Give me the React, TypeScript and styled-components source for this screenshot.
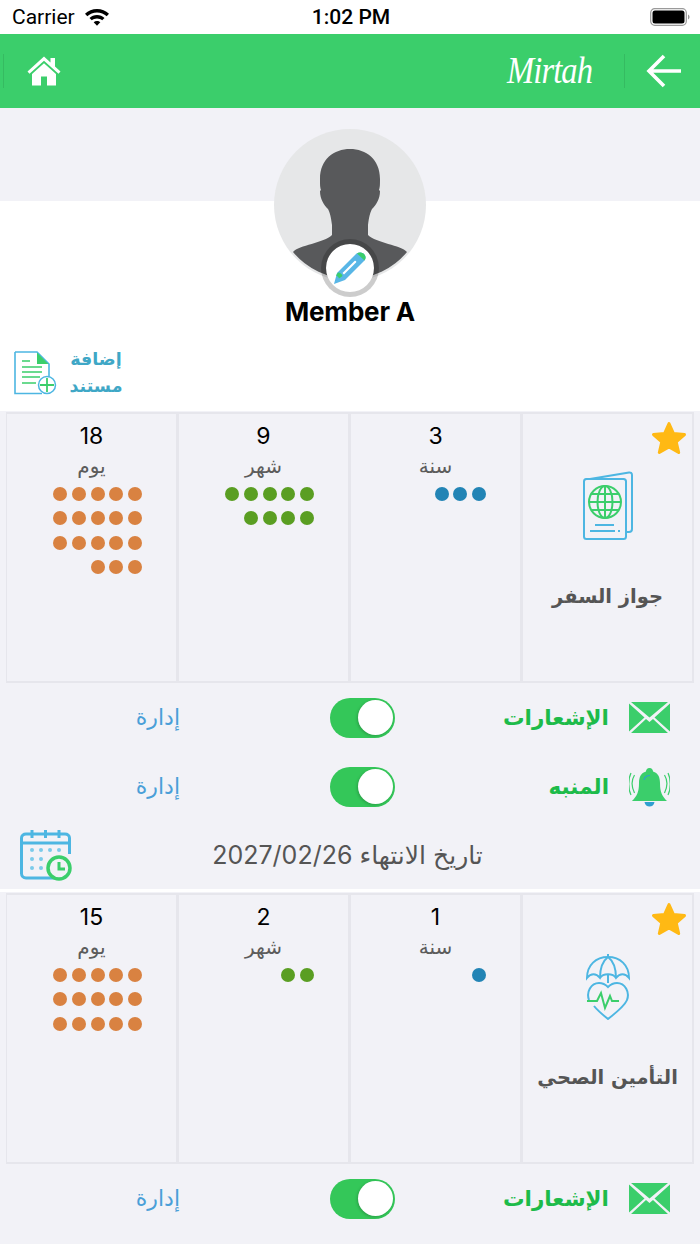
import styled, { createGlobalStyle } from "styled-components";

const ARABIC = `"DejaVu Sans", "Noto Sans", sans-serif`;

const GlobalStyle = createGlobalStyle`
  html, body {
    margin: 0;
    padding: 0;
    background: #f2f2f7;
  }
  * {
    box-sizing: border-box;
  }
`;

const Page = styled.div`
  width: 700px;
  height: 1244px;
  overflow: hidden;
  font-family: Inter, "Liberation Sans", sans-serif;
  background: #f2f2f7;
`;

/* status bar */
const StatusBar = styled.div`
  height: 34px;
  background: #fff;
  display: grid;
  grid-template-columns: 1fr auto 1fr;
  align-items: center;
  padding: 0 10px 0 12px;
  color: #000;
`;
const StatusLeft = styled.div`
  display: flex;
  align-items: center;
  gap: 9px;
  font-family: Roboto, sans-serif;
  font-size: 21px;
`;
const StatusTime = styled.div`
  font-family: Roboto, sans-serif;
  font-size: 21px;
  font-weight: 500;
`;
const StatusRight = styled.div`
  display: flex;
  justify-content: flex-end;
`;

/* nav */
const NavBar = styled.header`
  height: 74px;
  background: #3bce6b;
  display: flex;
  align-items: center;
  justify-content: space-between;
  padding: 0 18px 0 3px;
`;
const NavGroup = styled.div<{ $gap: number }>`
  display: flex;
  align-items: center;
  gap: ${(p) => p.$gap}px;
`;
const NavDivider = styled.span`
  display: block;
  width: 1px;
  height: 34px;
  background: #35bb61;
`;
const Logo = styled.span`
  display: block;
  width: 85px;
  color: #fff;
  font-family: "Liberation Serif", serif;
  font-style: italic;
  font-size: 37px;
  line-height: 40px;
  letter-spacing: -1px;
  transform: scaleX(0.88);
  transform-origin: left center;
  white-space: nowrap;
`;

/* profile header */
const Hero = styled.section`
  height: 303px;
  padding-top: 21px;
  background: linear-gradient(#f2f2f7 93px, #fff 93px);
  display: flex;
  flex-direction: column;
`;
const Avatar = styled.div`
  position: relative;
  width: 152px;
  height: 152px;
  margin: 0 auto;
`;
const EditBadge = styled.div`
  position: absolute;
  left: 47px;
  top: 110px;
  width: 58px;
  height: 58px;
  border-radius: 50%;
  background: #fff;
  background-clip: padding-box;
  border: 5.5px solid rgba(0, 0, 0, 0.2);
  display: flex;
  align-items: center;
  justify-content: center;
`;
const MemberName = styled.h1`
  margin: 15px 0 0;
  text-align: center;
  font-size: 26px;
  line-height: 32px;
  font-weight: 700;
  letter-spacing: -0.2px;
  color: #000;
`;
const AddDocument = styled.div`
  display: flex;
  align-items: center;
  gap: 10px;
  margin-top: 18px;
  padding-left: 14px;
`;
const AddDocumentLabel = styled.div`
  width: 56px;
  text-align: center;
  font-family: ${ARABIC};
  font-size: 17.5px;
  line-height: 27px;
  font-weight: 700;
  color: #3fa7c6;
  white-space: nowrap;
`;

/* document card */
const CardSection = styled.section`
  padding: 1px 6px 0;
`;
const CardGrid = styled.div`
  display: grid;
  grid-template-columns: repeat(4, 172px);
  height: 271px;
`;
const CountCell = styled.div`
  border: 2px solid #e6e6ec;
  border-left-width: 1px;
  display: flex;
  flex-direction: column;
  align-items: center;
  padding-top: 7px;
`;
const CountValue = styled.div`
  font-size: 23px;
  line-height: 30px;
  color: #000;
`;
const CountUnit = styled.div`
  font-family: ${ARABIC};
  font-size: 20px;
  line-height: 30px;
  color: #5c5c5c;
`;
const Dots = styled.div`
  width: 90px;
  margin: 6px 0 0 11px;
  display: flex;
  flex-flow: row-reverse wrap;
  column-gap: 4.7px;
  row-gap: 10.3px;
`;
const Dot = styled.span<{ $color: string }>`
  display: block;
  width: 14px;
  height: 14px;
  border-radius: 50%;
  background: ${(p) => p.$color};
`;
const DocCell = styled.div`
  position: relative;
  border: 2px solid #e6e6ec;
  border-left-width: 1px;
  display: flex;
  flex-direction: column;
  align-items: center;
  padding-top: 57px;
`;
const StarBadge = styled.div`
  position: absolute;
  top: 7px;
  right: 5px;
  line-height: 0;
`;
const DocIcon = styled.div`
  height: 70px;
  display: flex;
  align-items: center;
  justify-content: center;
`;
const DocTitle = styled.div`
  margin-top: 38px;
  font-family: ${ARABIC};
  font-size: 19.5px;
  line-height: 36px;
  font-weight: 700;
  color: #555;
  white-space: nowrap;
`;

/* setting rows */
const SettingRow = styled.div`
  height: 69px;
  display: flex;
  align-items: center;
  padding-right: 30px;
`;
const ManageLink = styled.a`
  width: 180px;
  text-align: right;
  font-family: ${ARABIC};
  font-size: 22px;
  color: #4a9fd8;
`;
const Toggle = styled.div`
  width: 65px;
  height: 40px;
  margin-left: 150px;
  border-radius: 20px;
  background: #34c759;
  padding: 2.5px;
  display: flex;
  justify-content: flex-end;
`;
const ToggleThumb = styled.span`
  display: block;
  width: 35px;
  height: 35px;
  border-radius: 50%;
  background: #fff;
  box-shadow: -1px 1px 3px rgba(0, 0, 0, 0.2);
`;
const SettingLabel = styled.div`
  flex: 1;
  text-align: right;
  padding-right: 20px;
  font-family: ${ARABIC};
  font-size: 21.5px;
  font-weight: 700;
  color: #1dbb4a;
`;
const SettingIcon = styled.div`
  width: 41px;
  display: flex;
  justify-content: center;
`;

const DateRow = styled.div`
  height: 68px;
  display: flex;
  align-items: center;
  padding: 0 77px 0 20px;
`;
const DateText = styled.div`
  flex: 1;
  text-align: center;
  direction: rtl;
  font-family: Inter, ${ARABIC};
  font-size: 25px;
  color: #555;
  white-space: nowrap;
`;
const Separator = styled.div`
  height: 3px;
  background: #fff;
`;

/* icons */
const WifiIcon = () => (
  <svg width="26" height="20" viewBox="0 0 26 20">
    <path fill="#000" d="M13 2C8.400 2 4.200 3.800 1 6.800L3.300 9.300C5.900 6.900 9.300 5.400 13 5.400S20.100 6.900 22.700 9.300L25 6.800C21.800 3.800 17.600 2 13 2Z" />
    <path fill="#000" d="M13 8C10.100 8 7.500 9.100 5.500 10.900L7.800 13.300C9.200 12.100 11 11.400 13 11.400S16.800 12.100 18.200 13.300L20.500 10.900C18.500 9.100 15.900 8 13 8Z" />
    <path fill="#000" d="M13 14C11.700 14 10.600 14.500 9.700 15.200L13 18.800L16.300 15.200C15.400 14.500 14.300 14 13 14Z" />
  </svg>
);

const BatteryIcon = () => (
  <svg width="40" height="20" viewBox="0 0 40 20">
    <rect x="0.700" y="1.700" width="35.600" height="16.600" rx="4" fill="none" stroke="#9a9a9a" strokeWidth="1.200" />
    <rect x="2.500" y="3.500" width="32" height="13" rx="2.500" fill="#000" />
    <path d="M38 7.500C39 8 39.500 9 39.500 10S39 12 38 12.500Z" fill="#9a9a9a" />
  </svg>
);

const HomeIcon = () => (
  <svg width="34" height="30" viewBox="0 0 34 30">
    <path fill="#fff" d="M17 0.500L0.500 15.500L2.500 17.800L17 4.700L31.500 17.800L33.500 15.500L28 10.500V2H23.500V6.400Z" />
    <path fill="#fff" d="M17 7.300L5 18V29.500H14V20.500H20V29.500H29V18Z" />
  </svg>
);

const BackArrow = () => (
  <svg width="36" height="34" viewBox="0 0 36 34">
    <path fill="none" stroke="#fff" strokeWidth="3.600" d="M18 2L3 17L18 32M3 17H35" />
  </svg>
);

const Silhouette = () => (
  <svg width="152" height="152" viewBox="0 0 152 152">
    <circle cx="76" cy="76" r="76" fill="#e6e7e8" />
    <path
      fill="#58595b"
      d="M76 20C60 20 46 30 46 50C46 56 46 58 47 61L46 62C46 70 50 76 54 80C56 84 57 88 58 96L58 106C50 114 25 116 19 123A74 74 0 0 0 133 123C127 116 102 114 94 106L94 96C95 88 96 84 98 80C102 76 106 70 106 62L105 61C106 58 106 56 106 50C106 30 92 20 76 20Z"
    />
  </svg>
);

const PencilIcon = () => (
  <svg width="34" height="34" viewBox="0 0 34 34">
    <path fill="#58b6e6" d="M1 33L4 22L23 3C25 1 29 1 31 3C33 5 33 8 31 10L12 29Z" />
    <path fill="#3bce6b" d="M24 2.500C26 1 29 1.500 31 3C33 5 33 7.500 31.500 9.500Z" />
    <path fill="#3bce6b" d="M5 21.500C7 21.500 9 23 9.500 25L6 27.500C5.500 26 4.500 25 3 24.500Z" />
    <path fill="#fff" d="M9.500 22L21.500 10C22.500 9 24 10.500 23 11.500L11 23.500Z" />
  </svg>
);

const AddDocIcon = () => (
  <svg width="44" height="44" viewBox="0 0 44 44">
    <path fill="none" stroke="#4db6e2" strokeWidth="1.600" d="M1 1H23L35 13V26M28 42.500H1V1" />
    <path fill="#3bce6b" d="M23 1.500L34.500 13H23Z" />
    <path stroke="#3bce6b" strokeWidth="1.500" d="M8 10H16M8 16H28M8 21H28M8 26H26M8 32H22" />
    <circle cx="33" cy="34" r="8.500" fill="#fff" stroke="#4db6e2" strokeWidth="1.500" />
    <path stroke="#3bce6b" strokeWidth="1.800" d="M33 27V41M26 34H40" />
  </svg>
);

const StarIcon = () => (
  <svg width="36" height="35" viewBox="0 0 36 35">
    <path
      fill="#ffb914"
      stroke="#ffb914"
      strokeWidth="3"
      strokeLinejoin="round"
      d="M18 2.500L22.500 12.500L33.500 13.500L25.200 20.800L27.700 31.500L18 25.900L8.300 31.500L10.800 20.800L2.500 13.500L13.500 12.500Z"
    />
  </svg>
);

const PassportIcon = () => (
  <svg width="50" height="70" viewBox="0 0 50 70">
    <path fill="none" stroke="#4db6e2" strokeWidth="2" d="M1 9L46 1.500C47.500 1.300 49 2 49 4V58C49 60 48 61 46 61H43" />
    <rect x="1" y="8" width="42" height="60" rx="2.500" fill="#f2f2f7" stroke="#4db6e2" strokeWidth="2" />
    <circle cx="22" cy="31" r="16" fill="none" stroke="#3bce6b" strokeWidth="2" />
    <ellipse cx="22" cy="31" rx="7.500" ry="16" fill="none" stroke="#3bce6b" strokeWidth="2" />
    <path fill="none" stroke="#3bce6b" strokeWidth="2" d="M22 15V47M6 31H38M8 23H36M8 39H36" />
    <path fill="none" stroke="#4db6e2" strokeWidth="2" d="M12 54H31M7 60H32M35 60H37" />
  </svg>
);

const HealthIcon = () => (
  <svg width="44" height="66" viewBox="0 0 44 66">
    <g fill="none" stroke="#4db6e2" strokeWidth="2">
      <path d="M1 24C1 11 10 3 22 3S43 11 43 24C39 19 34 19 30 24C27 19 17 19 14 24C10 19 5 19 1 24Z" />
      <path d="M22 0V3M22 20V29M14 24C14 13 18 6 22 3C26 6 30 13 30 24" />
      <path d="M3 46C0 38 5 29 13 29C17 29 20 31 22 33C24 31 27 29 31 29C39 29 44 38 41 46C39 51 31 58 22 65C17 61 12 57 8 52" />
    </g>
    <path fill="none" stroke="#3bce6b" strokeWidth="2" d="M1 47H11L15 39L19 54L24 42L26 47H33" />
  </svg>
);

const EnvelopeIcon = () => (
  <svg width="41" height="31" viewBox="0 0 41 31">
    <path fill="#3bce6b" d="M0 1.500L15.500 15.500L0 29.500Z M41 1.500L25.500 15.500L41 29.500Z" />
    <path fill="#3bce6b" d="M2 0H39L20.500 15.500Z" />
    <path fill="#3bce6b" d="M17 17L20.500 20L24 17L39 31H2Z" />
  </svg>
);

const BellIcon = () => (
  <svg width="41" height="40" viewBox="0 0 41 40">
    <path fill="#3bce6b" d="M20.500 1C23 1 24 3 24 4.500C29 6 31 10 31 16C31 25 33 29 38 34H3C8 29 10 25 10 16C10 10 12 6 17 4.500C17 3 18 1 20.500 1Z" />
    <path fill="#2f9fd0" d="M15.500 35H25.500C25 38 23 39.500 20.500 39.500S16 38 15.500 35Z" />
    <path fill="none" stroke="#2f9fd0" strokeWidth="1.200" d="M15 13C15.500 10 18 8.500 21 8.500" />
    <path fill="none" stroke="#3bce6b" strokeWidth="1.200" d="M5.500 8C2.500 13 2.500 20 5.500 26M2 6C-1 12 -1 22 2 28M35.500 8C38.500 13 38.500 20 35.500 26M39 6C42 12 42 22 39 28" />
  </svg>
);

const CalendarIcon = () => (
  <svg width="52" height="52" viewBox="0 0 52 52">
    <path fill="none" stroke="#4db6e2" strokeWidth="3" d="M40 49H6C3.500 49 1.500 47 1.500 44.500V9C1.500 6.500 3.500 5 6 5H45C47.500 5 49.500 6.500 49.500 9V25" />
    <path stroke="#4db6e2" strokeWidth="3" d="M1.500 14H49.500M12 1V9M25.500 1V9M39 1V9" />
    <g fill="#7ccbea">
      <circle cx="12" cy="21" r="2" />
      <circle cx="21" cy="21" r="2" />
      <circle cx="30" cy="21" r="2" />
      <circle cx="39" cy="21" r="2" />
      <circle cx="12" cy="30" r="2" />
      <circle cx="21" cy="30" r="2" />
      <circle cx="12" cy="39" r="2" />
      <circle cx="21" cy="39" r="2" />
    </g>
    <circle cx="39" cy="39" r="11" fill="#f2f2f7" stroke="#3bce6b" strokeWidth="3.500" />
    <path fill="none" stroke="#3bce6b" strokeWidth="3" d="M39 33V40H45" />
  </svg>
);

const DAY_COLOR = "#d98241";
const MONTH_COLOR = "#5a9e22";
const YEAR_COLOR = "#2284b5";

type CountProps = { value: number; unit: string; color: string };

const Count = ({ value, unit, color }: CountProps) => (
  <CountCell>
    <CountValue>{value}</CountValue>
    <CountUnit>{unit}</CountUnit>
    <Dots>
      {Array.from({ length: value }, (_, i) => (
        <Dot key={i} $color={color} />
      ))}
    </Dots>
  </CountCell>
);

type DocumentCardProps = {
  title: string;
  icon: React.ReactNode;
  years: number;
  months: number;
  days: number;
};

const DocumentCard = ({ title, icon, years, months, days }: DocumentCardProps) => (
  <CardSection>
    <CardGrid>
      <Count value={days} unit="يوم" color={DAY_COLOR} />
      <Count value={months} unit="شهر" color={MONTH_COLOR} />
      <Count value={years} unit="سنة" color={YEAR_COLOR} />
      <DocCell>
        <StarBadge>
          <StarIcon />
        </StarBadge>
        <DocIcon>{icon}</DocIcon>
        <DocTitle>{title}</DocTitle>
      </DocCell>
    </CardGrid>
  </CardSection>
);

const Setting = ({ label, icon }: { label: string; icon: React.ReactNode }) => (
  <SettingRow>
    <ManageLink>إدارة</ManageLink>
    <Toggle>
      <ToggleThumb />
    </Toggle>
    <SettingLabel>{label}</SettingLabel>
    <SettingIcon>{icon}</SettingIcon>
  </SettingRow>
);

const App = () => {
  return (
    <Page>
      <GlobalStyle />
      <StatusBar>
        <StatusLeft>
          Carrier
          <WifiIcon />
        </StatusLeft>
        <StatusTime>1:02 PM</StatusTime>
        <StatusRight>
          <BatteryIcon />
        </StatusRight>
      </StatusBar>
      <NavBar>
        <NavGroup $gap={23}>
          <NavDivider />
          <HomeIcon />
        </NavGroup>
        <NavGroup $gap={21}>
          <NavGroup $gap={32}>
            <Logo>Mirtah</Logo>
            <NavDivider />
          </NavGroup>
          <BackArrow />
        </NavGroup>
      </NavBar>
      <Hero>
        <Avatar>
          <Silhouette />
          <EditBadge>
            <PencilIcon />
          </EditBadge>
        </Avatar>
        <MemberName>Member A</MemberName>
        <AddDocument>
          <AddDocIcon />
          <AddDocumentLabel>
            إضافة
            <br />
            مستند
          </AddDocumentLabel>
        </AddDocument>
      </Hero>
      <DocumentCard title="جواز السفر" icon={<PassportIcon />} years={3} months={9} days={18} />
      <Setting label="الإشعارات" icon={<EnvelopeIcon />} />
      <Setting label="المنبه" icon={<BellIcon />} />
      <DateRow>
        <CalendarIcon />
        <DateText>تاريخ الانتهاء 2027/02/26</DateText>
      </DateRow>
      <Separator />
      <DocumentCard title="التأمين الصحي" icon={<HealthIcon />} years={1} months={2} days={15} />
      <Setting label="الإشعارات" icon={<EnvelopeIcon />} />
    </Page>
  );
};

export default App;
